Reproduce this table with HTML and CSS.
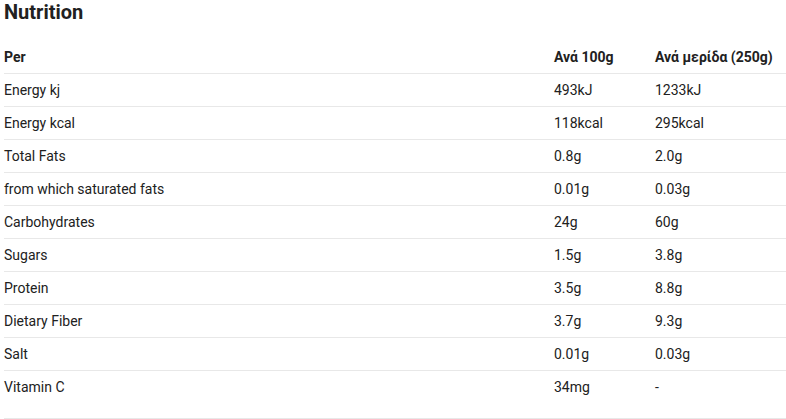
FILE: index.html
```html
<!DOCTYPE html>
<html>
	<head>
		<meta charset="UTF-8" />
		<title>Nutrition</title>
		<link rel="stylesheet" href="styles.css">
	</head>
	<body>
		<section class="nutrition">
			<h2 class="nutrition-title">Nutrition</h2>
			<table class="nutrition-table">
				<thead>
					<tr>
						<th class="col-name">Per</th>
						<th class="col-100">Ανά 100g</th>
						<th class="col-portion">Ανά μερίδα (250g)</th>
					</tr>
				</thead>
				<tbody>
					<tr><td>Energy kj</td><td>493kJ</td><td>1233kJ</td></tr>
					<tr><td>Energy kcal</td><td>118kcal</td><td>295kcal</td></tr>
					<tr><td>Total Fats</td><td>0.8g</td><td>2.0g</td></tr>
					<tr><td>from which saturated fats</td><td>0.01g</td><td>0.03g</td></tr>
					<tr><td>Carbohydrates</td><td>24g</td><td>60g</td></tr>
					<tr><td>Sugars</td><td>1.5g</td><td>3.8g</td></tr>
					<tr><td>Protein</td><td>3.5g</td><td>8.8g</td></tr>
					<tr><td>Dietary Fiber</td><td>3.7g</td><td>9.3g</td></tr>
					<tr><td>Salt</td><td>0.01g</td><td>0.03g</td></tr>
					<tr class="last"><td>Vitamin C</td><td>34mg</td><td>-</td></tr>
				</tbody>
			</table>
		</section>
	</body>
</html>
```

FILE: styles.css
```css
* {
	margin: 0;
	padding: 0;
	box-sizing: border-box;
}
body {
	font-family: Roboto, "Liberation Sans", sans-serif;
	color: #212121;
	background-color: #fff;
}
.nutrition {
	padding-left: 4px;
}
.nutrition-title {
	font-size: 20px;
	line-height: 24px;
	font-weight: 700;
	margin-bottom: 17px;
}
.nutrition-table {
	width: 782px;
	border-collapse: collapse;
	font-size: 14px;
	line-height: 16px;
}
.nutrition-table th,
.nutrition-table td {
	text-align: left;
	padding: 8px 0;
	border-bottom: 1px solid #e8e8e8;
	vertical-align: top;
}
.nutrition-table th {
	font-weight: 700;
}
.col-name {
	width: 550px;
}
.col-100 {
	width: 101px;
}
.nutrition-table tr.last td {
	padding-bottom: 23px;
}
```
